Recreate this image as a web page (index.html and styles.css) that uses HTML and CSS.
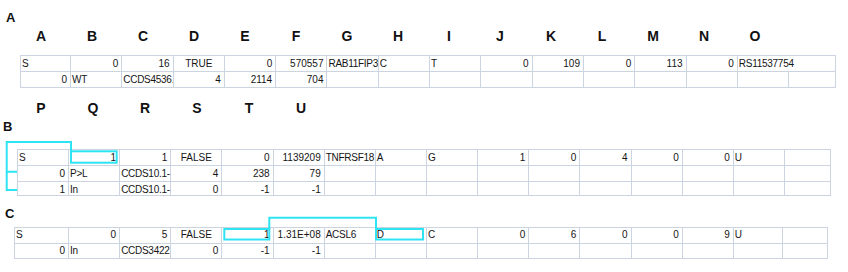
FILE: index.html
```html
<!DOCTYPE html>
<html>
<head>
<meta charset="utf-8">
<title>Sheet</title>
<link rel="stylesheet" href="styles.css">
</head>
<body>
<div class="sheet">
  <div class="label label-a">A</div>
  <div class="colhead colhead-1">
    <span>A</span><span>B</span><span>C</span><span>D</span><span>E</span><span>F</span><span>G</span><span>H</span><span>I</span><span>J</span><span>K</span><span>L</span><span>M</span><span>N</span><span>O</span>
  </div>
  <div class="grid grid-a">
    <div class="c">S</div>
    <div class="c n">0</div>
    <div class="c n">16</div>
    <div class="c m">TRUE</div>
    <div class="c n">0</div>
    <div class="c n">570557</div>
    <div class="c">RAB11FIP3</div>
    <div class="c">C</div>
    <div class="c">T</div>
    <div class="c n">0</div>
    <div class="c n">109</div>
    <div class="c n">0</div>
    <div class="c n">113</div>
    <div class="c n">0</div>
    <div class="c w">RS11537754</div>

    <div class="c n">0</div>
    <div class="c">WT</div>
    <div class="c">CCDS4536.1</div>
    <div class="c n">4</div>
    <div class="c n">2114</div>
    <div class="c n">704</div>
    <div class="c"></div><div class="c"></div><div class="c"></div><div class="c"></div><div class="c"></div>
    <div class="c"></div><div class="c"></div><div class="c"></div><div class="c"></div><div class="c"></div>
  </div>

  <div class="colhead colhead-2">
    <span>P</span><span>Q</span><span>R</span><span>S</span><span>T</span><span>U</span>
  </div>
  <div class="label label-b">B</div>
  <div class="block block-b">
    <div class="grid grid-b">
      <div class="c">S</div>
      <div class="c n">1</div>
      <div class="c n">1</div>
      <div class="c m">FALSE</div>
      <div class="c n">0</div>
      <div class="c n">1139209</div>
      <div class="c">TNFRSF18</div>
      <div class="c">A</div>
      <div class="c">G</div>
      <div class="c n">1</div>
      <div class="c n">0</div>
      <div class="c n">4</div>
      <div class="c n">0</div>
      <div class="c n">0</div>
      <div class="c">U</div>
      <div class="c"></div>

      <div class="c n">0</div>
      <div class="c">P&gt;L</div>
      <div class="c">CCDS10.1-</div>
      <div class="c n">4</div>
      <div class="c n">238</div>
      <div class="c n">79</div>
      <div class="c"></div><div class="c"></div><div class="c"></div><div class="c"></div><div class="c"></div>
      <div class="c"></div><div class="c"></div><div class="c"></div><div class="c"></div><div class="c"></div>

      <div class="c n">1</div>
      <div class="c">In</div>
      <div class="c">CCDS10.1-</div>
      <div class="c n">0</div>
      <div class="c n">-1</div>
      <div class="c n">-1</div>
      <div class="c"></div><div class="c"></div><div class="c"></div><div class="c"></div><div class="c"></div>
      <div class="c"></div><div class="c"></div><div class="c"></div><div class="c"></div><div class="c"></div>
    </div>
    <svg class="overlay overlay-b" width="848" height="60" viewBox="0 0 848 60">
      <path d="M17 49 H6.7 V1 H71 V10.3 M6.7 30.7 H17" />
      <rect x="71" y="10.3" width="45.7" height="11.4" />
    </svg>
  </div>

  <div class="label label-c">C</div>
  <div class="block block-c">
    <div class="grid grid-c">
      <div class="c">S</div>
      <div class="c n">0</div>
      <div class="c n">5</div>
      <div class="c m">FALSE</div>
      <div class="c n">1</div>
      <div class="c n">1.31E+08</div>
      <div class="c">ACSL6</div>
      <div class="c">D</div>
      <div class="c">C</div>
      <div class="c n">0</div>
      <div class="c n">6</div>
      <div class="c n">0</div>
      <div class="c n">0</div>
      <div class="c n">9</div>
      <div class="c">U</div>
      <div class="c"></div>

      <div class="c n">0</div>
      <div class="c">In</div>
      <div class="c">CCDS3422.1</div>
      <div class="c n">0</div>
      <div class="c n">-1</div>
      <div class="c n">-1</div>
      <div class="c"></div><div class="c"></div><div class="c"></div><div class="c"></div><div class="c"></div>
      <div class="c"></div><div class="c"></div><div class="c"></div><div class="c"></div><div class="c"></div>
    </div>
    <svg class="overlay overlay-c" width="848" height="40" viewBox="0 0 848 40">
      <path d="M269.3 18 V6.7 H376 V18" />
      <rect x="224.3" y="18" width="45" height="10.5" />
      <rect x="376" y="18" width="47" height="10.5" />
    </svg>
  </div>
</div>
</body>
</html>
```

FILE: styles.css
```css
* {
  box-sizing: border-box;
}

body {
  margin: 0;
  background: #ffffff;
  font-family: "Liberation Sans", Arial, sans-serif;
  color: #111111;
}

.sheet {
  width: 848px;
  padding-top: 10px;
}

.label {
  height: 15px;
  font-size: 13px;
  line-height: 15px;
  font-weight: bold;
}

.label-a {
  padding-left: 6px;
}

.label-b {
  margin-top: 3px;
  padding-left: 3px;
}

.label-c {
  margin-top: 10px;
  padding-left: 5px;
}

.colhead {
  display: flex;
  height: 16px;
  font-size: 14px;
  line-height: 16px;
  font-weight: bold;
}

.colhead span {
  flex: none;
  text-align: center;
}

.colhead-1 {
  margin-top: 3px;
  padding-left: 15.5px;
}

.colhead-1 span {
  width: 51px;
}

.colhead-2 {
  margin-top: 12px;
  padding-left: 15px;
}

.colhead-2 span {
  width: 52px;
}

.grid {
  display: grid;
  width: max-content;
  border-top: 1px solid #ccd4e2;
  border-left: 1px solid #ccd4e2;
  font-size: 10px;
  color: #151515;
}

.grid-a {
  margin: 11px 0 0 20px;
  grid-template-columns: 50px repeat(14, 51.3px) 47px;
  grid-auto-rows: 16px;
  line-height: 15px;
}

.block {
  position: relative;
}

.block-b {
  margin-top: 7px;
  padding-top: 8px;
}

.grid-b {
  margin-left: 17px;
  grid-template-columns: 51px repeat(14, 51.15px) 46px;
  grid-template-rows: 16px 16px 14px;
  line-height: 15px;
}

.block-c {
  padding-top: 6px;
}

.grid-c {
  margin-left: 14px;
  grid-template-columns: 54px repeat(13, 51.15px) 49px 45px;
  grid-auto-rows: 15.5px;
  line-height: 14.5px;
}

.c {
  border-right: 1px solid #ccd4e2;
  border-bottom: 1px solid #ccd4e2;
  overflow: hidden;
  white-space: nowrap;
  padding: 0 0 0 1px;
  letter-spacing: -0.28px;
}

.n {
  text-align: right;
  padding: 0 3px 0 0;
  letter-spacing: 0;
}

.m {
  text-align: center;
  padding: 0;
  letter-spacing: 0;
}

.w {
  grid-column: span 2;
}

.overlay {
  position: absolute;
  left: 0;
  pointer-events: none;
  fill: none;
  stroke: #2fe4f2;
  stroke-width: 2;
}

.overlay-b {
  top: 0;
}

.overlay-c {
  top: -10px;
}
```
